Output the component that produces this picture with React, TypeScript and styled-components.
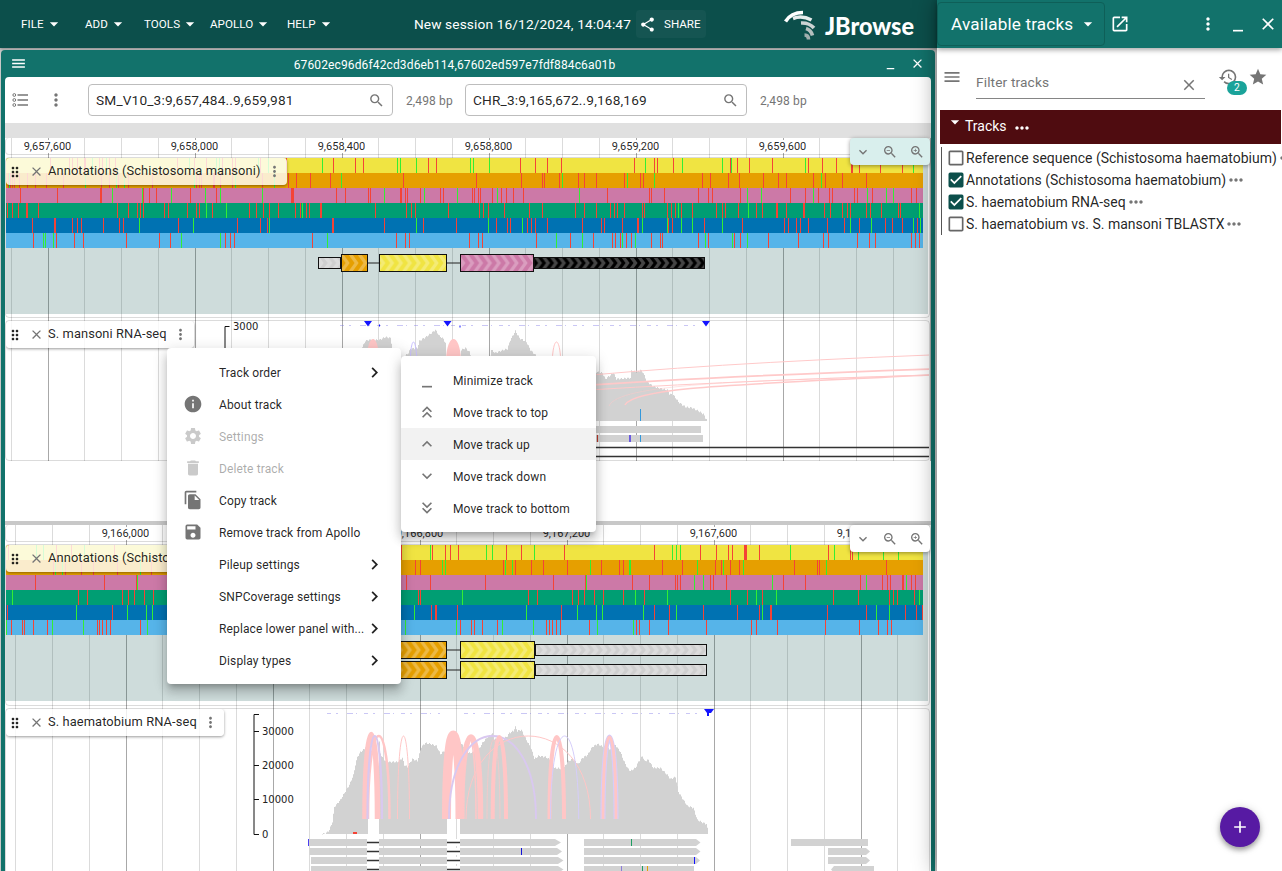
import React from "react";
import styled, { createGlobalStyle, css } from "styled-components";
import {
  MdAdd,
  MdArrowDropDown,
  MdCheckBox,
  MdCheckBoxOutlineBlank,
  MdChevronRight,
  MdClose,
  MdDelete,
  MdDragIndicator,
  MdExpandLess,
  MdExpandMore,
  MdFileCopy,
  MdHistory,
  MdInfo,
  MdKeyboardDoubleArrowDown,
  MdKeyboardDoubleArrowUp,
  MdMenu,
  MdMinimize,
  MdMoreHoriz,
  MdMoreVert,
  MdOpenInNew,
  MdSave,
  MdSearch,
  MdSettings,
  MdShare,
  MdStar,
  MdZoomIn,
  MdZoomOut,
} from "react-icons/md";

const color = {
  primary: "#0c4f4b",
  secondary: "#1aa39a",
  secondaryDark: "#12726b",
  tertiary: "#4f0c10",
  quaternary: "#571aa3",
  text: "rgba(0,0,0,0.87)",
  muted: "#757575",
  border: "rgba(0,0,0,0.14)",
};

const GlobalStyle = createGlobalStyle`
  *, *::before, *::after { box-sizing: border-box; }
  html, body { margin: 0; overflow: hidden; }
  body { font-family: Roboto, "Liberation Sans", sans-serif; font-size: 12px; color: ${color.text}; }
  svg { display: block; flex: none; }
`;

/* ---------- shell ---------- */

const Shell = styled.div`
  display: flex;
  width: 1282px;
  height: 871px;
  overflow: hidden;
  background: #c8c8c8;
`;

const Workspace = styled.div`
  position: relative;
  display: flex;
  flex-direction: column;
  width: 937px;
  flex: none;
`;

const AppBar = styled.header`
  display: flex;
  align-items: center;
  height: 48px;
  flex: none;
  padding: 0 22px 0 15px;
  background: ${color.primary};
  color: #fff;
  box-shadow: 0 1px 3px rgba(0, 0, 0, 0.35);
`;

const MenuButton = styled.button<{ $width: number }>`
  display: flex;
  align-items: center;
  width: ${(p) => p.$width}px;
  padding: 0 0 0 6px;
  border: 0;
  background: none;
  color: inherit;
  font: 400 11.6px Roboto, sans-serif;
  letter-spacing: 0.05px;
  text-transform: uppercase;
  svg { margin-left: 0; }
`;

const SessionName = styled.div`
  margin-left: auto;
  margin-right: 5px;
  padding-bottom: 1px;
  font-size: 13.7px;
  letter-spacing: 0.13px;
`;

const ShareButton = styled.button`
  display: flex;
  align-items: center;
  gap: 8px;
  width: 70px;
  height: 28px;
  padding: 0 0 0 3px;
  border: 0;
  border-radius: 4px;
  background: rgba(255, 255, 255, 0.04);
  color: #fff;
  font: 400 11.6px Roboto, sans-serif;
`;

const Logo = styled.svg`
  margin-left: 78px;
`;

const ViewFrame = styled.section`
  display: flex;
  flex-direction: column;
  flex: 1;
  margin: 2px 2px 0 1px;
  padding: 0 4px;
  border-radius: 4px 4px 0 0;
  background: ${color.secondaryDark};
  overflow: hidden;
`;

const ViewTitleBar = styled.div`
  display: grid;
  grid-template-columns: 60px 1fr 92px;
  align-items: center;
  height: 27px;
  flex: none;
  padding-left: 5px;
  color: #fff;
  font-size: 12px;
  letter-spacing: 0.13px;
  text-align: center;
  span { padding-top: 2px; }
`;

const TitleActions = styled.div`
  display: flex;
  align-items: center;
  justify-content: flex-end;
  gap: 12px;
  padding-right: 6px;
`;

const ViewBody = styled.div`
  display: flex;
  flex-direction: column;
  flex: 1;
  border-radius: 4px 4px 0 0;
  background: #fff;
  overflow: hidden;
`;

const NavBar = styled.div`
  display: flex;
  align-items: center;
  height: 46px;
  flex: none;
  padding-left: 7px;
  color: ${color.muted};
`;

const NavMenu = styled.div`
  margin: 0 22px 0 17px;
`;

const LocationBox = styled.div<{ $width: number }>`
  display: flex;
  align-items: center;
  justify-content: space-between;
  width: ${(p) => p.$width}px;
  height: 32px;
  padding: 0 7px;
  border: 1px solid #bdbdbd;
  border-radius: 4px;
  color: ${color.text};
  font-size: 13.7px;
  letter-spacing: 0.15px;
  svg { color: ${color.muted}; }
`;

const SpanText = styled.span`
  width: 72px;
  padding: 1px 0 0 13px;
  letter-spacing: 0.13px;
`;

const Overview = styled.div`
  height: 15px;
  flex: none;
  background: #e0e0e0;
`;

const EmptySpace = styled.div`
  height: 60px;
  flex: none;
`;

const PanelDivider = styled.div`
  height: 4px;
  flex: none;
  background: #c8c8c8;
`;

/* ---------- linear view ---------- */

const gridLines = css<{ $offset: number }>`
  background-image: linear-gradient(
    90deg,
    rgba(0, 0, 0, 0.34) 0 1px,
    transparent 1px 36px,
    rgba(0, 0, 0, 0.14) 36px 37px,
    transparent 37px 73px,
    rgba(0, 0, 0, 0.14) 73px 74px,
    transparent 74px 110px,
    rgba(0, 0, 0, 0.14) 110px 111px,
    transparent 111px
  );
  background-size: 147px 100%;
  background-position-x: ${(p) => p.$offset}px;
`;

const LinearView = styled.div<{ $offset: number; $height: number }>`
  position: relative;
  display: flex;
  flex-direction: column;
  gap: 2px;
  height: ${(p) => p.$height}px;
  flex: none;
  padding-right: 1px;
  ${gridLines}
`;

const ScaleBar = styled.div<{ $offset: number }>`
  display: flex;
  align-items: center;
  height: 17px;
  flex: none;
  border: 1px solid ${color.border};
  border-top: 0;
  border-radius: 4px;
  overflow: hidden;
  > :first-child { margin-left: ${(p) => p.$offset}px; }
`;

const ScaleLabel = styled.div`
  display: flex;
  justify-content: center;
  width: 147px;
  flex: none;
  font-size: 11px;
  line-height: 13px;
  span { background: #fff; }
`;

const TrackPaper = styled.div<{ $height: number }>`
  position: relative;
  height: ${(p) => p.$height}px;
  flex: none;
  border: 1px solid ${color.border};
  border-radius: 4px;
  overflow: hidden;
`;

const AnnotationArea = styled.div`
  margin-right: 1px;
  background: rgba(12, 79, 75, 0.2);
`;

const TrackLabel = styled.div<{ $width: number }>`
  position: absolute;
  left: 0;
  top: 0;
  display: flex;
  align-items: center;
  width: ${(p) => p.$width}px;
  height: 27px;
  padding-left: 0.5px;
  border-radius: 4px;
  background: rgba(255, 255, 255, 0.8);
  box-shadow: 0 1px 3px rgba(0, 0, 0, 0.4);
  font-size: 12.86px;
  letter-spacing: 0.1px;
  white-space: nowrap;
  span { padding-bottom: 2px; }
  svg:nth-of-type(2) { margin: 0 4.5px 0 6px; color: ${color.muted}; }
  svg:nth-of-type(3) { margin-left: 5px; color: ${color.muted}; }
`;

const ZoomControls = styled.div<{ $tinted: boolean }>`
  position: absolute;
  right: 1px;
  top: 0;
  display: flex;
  align-items: center;
  gap: 11px;
  width: 80px;
  height: 27px;
  padding-left: 5px;
  border-radius: 4px;
  background: ${(p) => (p.$tinted ? "#d9efed" : "#fff")};
  box-shadow: 0 1px 4px rgba(0, 0, 0, 0.4);
  color: ${color.muted};
  z-index: 1;
`;

/* ---------- menus ---------- */

const MenuPanel = styled.div<{ $left: number; $top: number; $width: number }>`
  position: absolute;
  left: ${(p) => p.$left}px;
  top: ${(p) => p.$top}px;
  width: ${(p) => p.$width}px;
  padding: 8px 0;
  border-radius: 4px;
  background: #fff;
  box-shadow: 0 5px 5px -3px rgba(0, 0, 0, 0.2), 0 8px 10px 1px rgba(0, 0, 0, 0.14),
    0 3px 14px 2px rgba(0, 0, 0, 0.12);
  z-index: 2;
`;

const MenuRow = styled.div<{ $disabled?: boolean; $active?: boolean }>`
  display: grid;
  grid-template-columns: 36px 1fr auto;
  align-items: center;
  height: 32px;
  padding: 0 16px;
  background: ${(p) => (p.$active ? "#f2f2f2" : "transparent")};
  opacity: ${(p) => (p.$disabled ? 0.38 : 1)};
  letter-spacing: 0.13px;
  white-space: nowrap;
  > svg:first-child { color: ${color.muted}; }
  span { padding-top: 2px; }
`;

/* ---------- drawer ---------- */

const Drawer = styled.aside`
  position: relative;
  display: flex;
  flex-direction: column;
  width: 345px;
  flex: none;
  background: #fff;
  box-shadow: 0 0 22px rgba(0, 0, 0, 0.42);
`;

const DrawerHeader = styled.div`
  display: flex;
  align-items: center;
  height: 48px;
  flex: none;
  background: ${color.secondaryDark};
  color: #fff;
  box-shadow: 0 2px 5px rgba(0, 0, 0, 0.35);
`;

const WidgetSelect = styled.div`
  display: flex;
  align-items: center;
  width: 168px;
  height: 44px;
  margin-right: 5px;
  padding-left: 13px;
  border: 1px solid #0e5f58;
  border-radius: 4px;
  font-size: 17.1px;
  letter-spacing: 0.16px;
  svg { margin-left: 5px; }
`;

const DrawerActions = styled.div`
  display: flex;
  align-items: center;
  gap: 10px;
  margin-left: auto;
  padding-right: 4px;
`;

const FilterBar = styled.div`
  display: flex;
  align-items: flex-start;
  height: 62px;
  flex: none;
  padding: 19px 0 0 5px;
  color: ${color.muted};
`;

const FilterInput = styled.div`
  display: flex;
  justify-content: space-between;
  width: 229px;
  height: 32px;
  margin: 0 13px 0 14px;
  border-bottom: 1px solid #858585;
  font-size: 13.7px;
  line-height: 31px;
  letter-spacing: 0.13px;
  svg { margin: 9px 7px 0 0; }
`;

const HistoryBadge = styled.div`
  position: relative;
  margin-right: 10px;
  span {
    position: absolute;
    left: 9px;
    top: 14px;
    width: 20px;
    height: 14px;
    border-radius: 7px;
    background: ${color.secondary};
    color: #fff;
    font-size: 10.3px;
    line-height: 14px;
    text-align: center;
  }
`;

const Category = styled.div`
  display: flex;
  align-items: center;
  height: 34px;
  flex: none;
  margin: 0 1px 3px 3px;
  padding-left: 5px;
  background: ${color.tertiary};
  color: #fff;
  font-size: 14px;
  span { padding-bottom: 2px; }
  svg:first-child { margin: -10px 0 0 0; }
  svg:last-child { margin: 2px 0 0 5px; }
`;

const TrackList = styled.div`
  margin-left: 4px;
  padding-left: 4px;
  border-left: 1px solid #555;
`;

const TrackItem = styled.div`
  display: flex;
  align-items: center;
  height: 22px;
  font-size: 14px;
  white-space: nowrap;
  color: ${color.muted};
  span { color: ${color.text}; }
`;

const CheckIcon = styled.div<{ $checked: boolean }>`
  color: ${(p) => (p.$checked ? color.primary : "#666")};
`;

const AddButton = styled.button`
  position: absolute;
  right: 22px;
  bottom: 24px;
  display: flex;
  align-items: center;
  justify-content: center;
  width: 40px;
  height: 40px;
  border: 0;
  border-radius: 50%;
  background: ${color.quaternary};
  color: #fff;
  box-shadow: 0 3px 5px rgba(0, 0, 0, 0.3), 0 1px 10px rgba(0, 0, 0, 0.18);
`;

/* ---------- data ---------- */

// Stop codons are red, start codons ("g" prefix) are green; "*n" widens a mark to n pixels.
const frameColors = ["#f0e442", "#e69f00", "#cc79a7", "#009e73", "#0072b2", "#56b4e9"];

const mansoniFrames = [
  "50 69 72 77 84*2 g92 99 102 g106 109 115 177 g189 194 206 g216 g219 222 232 235 g258 260 g268 286 g322 333 355 363 g397 g400 g416 428 436 g470 g473 g489 520 535 547 561 634 g645 654 657 673 g682 g722 730 g731 737 749 772 g805 808 822 836 851*2 859 880 902 g913",
  "8 g9 10 12 14 19 27 35 46 63 g85 101 109 g116 118 g124 128 152 g194 196 199 201 213*2 220 232 g235 262 g274 288 296 310 330 g341 403 476 521 542 544 559 g562 578 584 596 624 g627 640 643 g654 702 710 728 739 763 778 786 813 g821 825 842 866",
  "20 57 100*2 g112 g142 143 149 156 g171 190 g205 216 g220 g262 291*3 336 345 368 370 g384 400*2 405 407 420 g424 440 443 g457 472 474 478 480 492 g497 501 506 513 523 g579 607 649 651 664 698 708 712 740 g747 g761 790 805 g813 818 829 832 854 857 g867 872 g886 g893 911 916",
  "7 12 18 26*2 38 117 128 137 140 143 164 168 187 196 199 g206 212 g226 249 256 263 269 278 295 300 g302 306 309 320*2 375 406 411 415 448 479 483 488 504 529 542 575 584 596 610 614 617 624 642 644 667 671 675 g678 681 692 716 722 725 738 g748 756 762 776*2 786 803*2 824 830 842 847 850 866 870 881 898 900 g919",
  "32 54*2 72 77 81 103 119 123 g139 178 g193 237 260 267 g269 332*2 384 g416 423 456 g488 496 507 510 g522 527 531 535 547 582 601 604 622 637*2 g642 g667 668 672 g681 g692 704 g722 742 784 788 796 800 808 827 844 g850 859 g871 885 892 902 g913 917 g920",
  "33 g43 g45 g53 56 74 83 126 159 170 g181 g220 225 230 234 312 g327 396 405 409 469 478 482 536 g556 570 g582 593 612 615 620 g622 626 631 g635 651 660 662 698 g705 708 g732 734 740 g747 768 798 823 828 857 869 875 911 915 919",
];

const haematobiumFrames = [
  "8 g36 g43 56 71 g84 114 401 g430 432 445 450 458 g486 g492 506 521 g534 564 654 g672 g676 g680 700 716 728 732 744*3 759 g790 828 g834 850 852 g858 g883 g898",
  "53 g55 g62 65 81 93 117 g140 151 415 420 g442 g445 503 g505 g512 515 531 543 567 g590 601 619 623 g629 g630 662 682 g697 715 721 g723 730 739 g743 794 817 819 g826 886",
  "35 104 136 g137 406 430 485 553 585 g586 632 649 675 677 680 g694 g703 710 713 726 g772 783 805 860 g866 882 887 890 902*2 g906 911 915",
  "g12 78 87 122 128 134 144 153 418 420 g462 528 537 572 578 584 594 603 623 g635 644 g667 730 747 g756 762 g776 833 858 889 893 897 914 g919",
  "7 g76 112 g127 g146 g152 g414 431 435*2 457 g526 561 g577 g596 g602 g643 654 669 g676 703 737 759 g762 770*2 827 866 g876 g889 905 916 922",
  "g6 11 22 24 33 47 g52 g83 97 99 102 106 110 140 g147 g405 g456 460 471 474 482 497 g502 g533 546 549 552 556 560 589 g597 g633 636 639 649 668 706 751 756 777 825 859 878 887 891",
];

type Exon = { x: number; end: number; fill: string; y: number; utr?: boolean };

const mansoniExons: Exon[] = [
  { x: 318, end: 341, fill: "#dcdcdc", y: 263, utr: true },
  { x: 534, end: 705, fill: "#000", y: 263, utr: true },
  { x: 341, end: 368, fill: "#e69f00", y: 263 },
  { x: 379, end: 447, fill: "#f0e442", y: 263 },
  { x: 460, end: 534, fill: "#cc79a7", y: 263 },
];

const haematobiumExons: Exon[] = [650, 670].flatMap((y) => [
  { x: 535, end: 707, fill: "#dcdcdc", y, utr: true },
  { x: 370, end: 447, fill: "#e69f00", y },
  { x: 460, end: 535, fill: "#f0e442", y },
]);

function FrameRow({ marks, fill, y }: { marks: string; fill: string; y: number }) {
  return (
    <g shapeRendering="crispEdges">
      <rect x={6} y={y} width={917} height={15} fill={fill} />
      {marks.split(" ").map((mark, i) => {
        const start = mark.startsWith("g");
        const [x, w] = mark.replace("g", "").split("*").map(Number);
        return <rect key={i} x={x} y={y} width={w || 1} height={15} fill={start ? "#33ee33" : "#f44336"} />;
      })}
    </g>
  );
}

function ExonBox({ exon }: { exon: Exon }) {
  const half = exon.utr ? 6 : 9;
  const pattern = exon.fill === "#000" ? "chevDark" : exon.fill === "#dcdcdc" ? "chevGray" : "chev";
  const box = { x: exon.x + 0.5, y: exon.y - half + 0.5, width: exon.end - exon.x - 1, height: half * 2 - 1 };
  return (
    <g>
      <rect {...box} fill={exon.fill} />
      <rect {...box} fill={`url(#${pattern}${exon.y})`} stroke="#111" strokeWidth={1} />
    </g>
  );
}

function Chevrons({ y }: { y: number }) {
  // Each arrow is deeper than one tile, so the neighbour's tail is drawn as well.
  const pattern = (name: string, fill: string, opacity: number, half: number, depth: number, period: number) => (
    <pattern id={`${name}${y}`} x={1} y={y - 10} width={period} height={20} patternUnits="userSpaceOnUse">
      {[-period, 0].map((x) => (
        <path
          key={x}
          d={`M${x} ${10 - half}h4l${depth} ${half}l-${depth} ${half}h-4l${depth}-${half}z`}
          fill={fill}
          opacity={opacity}
        />
      ))}
    </pattern>
  );
  return (
    <defs>
      {pattern("chev", "#fff", 0.27, 9, 6.5, 8.9)}
      {pattern("chevGray", "#bbb", 0.4, 6, 4.5, 8.6)}
      {pattern("chevDark", "#fff", 0.27, 6, 4.5, 7.95)}
    </defs>
  );
}

function AnnotationCanvas({ top, frames, exons }: { top: number; frames: string[]; exons: Exon[] }) {
  const rows = Array.from(new Set(exons.map((e) => e.y)));
  return (
    <svg width={923} height={156} viewBox={`6 ${top} 923 156`}>
      {frames.map((marks, i) => (
        <FrameRow key={i} marks={marks} fill={frameColors[i]} y={top + i * 15} />
      ))}
      {rows.map((y) => (
        <g key={y}>
          <Chevrons y={y} />
          <rect x={368} y={y - 0.5} width={110} height={1} fill="#222" />
        </g>
      ))}
      {exons.map((exon, i) => (
        <ExonBox key={i} exon={exon} />
      ))}
    </svg>
  );
}

/** Half-loop joining two splice sites; the crest sits at three quarters of the control height. */
function Arc({ from, to, base, crest, width = 1, stroke = "#ffc6c6" }: {
  from: number; to: number; base: number; crest: number; width?: number; stroke?: string;
}) {
  const control = base - (base - crest) / 0.75;
  return (
    <path
      d={`M${from} ${base}C${from} ${control} ${to} ${control} ${to} ${base}`}
      fill="none"
      stroke={stroke}
      strokeWidth={width}
    />
  );
}

// Turns a smooth outline into one-pixel steps like binned coverage.
function steppedPath(points: string, base: number) {
  const pts = points.split(" ").map((p) => p.split(",").map(Number));
  let d = `M${pts[0][0]} ${base}`;
  for (let i = 0; i < pts.length - 1; i++) {
    const [x0, y0] = pts[i];
    const [x1, y1] = pts[i + 1];
    for (let x = x0; x < x1; x++) {
      const y = y0 + ((y1 - y0) * (x - x0)) / (x1 - x0);
      const jitter = Math.sin(x * 1.9) * 0.8;
      d += `L${x} ${(y + jitter).toFixed(1)}H${x + 1}`;
    }
  }
  return `${d}V${base}Z`;
}

const Specks = ({ y, runs }: { y: number; runs: [number, number][] }) => (
  <g>
    {runs.map(([a, b]) => (
      <path key={a} d={`M${a} ${y}H${b}`} stroke="#7d74e8" strokeWidth={1} strokeDasharray="4 5 2 9 6 3 1 7" opacity={0.4} />
    ))}
  </g>
);

const COVERAGE = "#d2d2d2";

function MansoniReads() {
  return (
    <svg width={924} height={138} viewBox="6 321 924 138">
      <path d="M229.500 326.500H225V400" fill="none" stroke="#111" />
      <text x="233" y="330" fontFamily="DejaVu Sans" fontSize="10" fill="#222">3000</text>
      <Specks y={325.5} runs={[[340, 460], [462, 700]]} />
      <path d={steppedPath("362,347 365,341 368,340 379,340 385,337 390,338 392,348", 430)} fill={COVERAGE} />
      <path d={steppedPath("400,360 408,353 410,349 417,348 419,341 427,336 431,333 435,330 439,336 443,339 446,345", 430)} fill={COVERAGE} />
      <path d={steppedPath("461,350 465,348 469,352 472,360 489,360 491,350 495,353 500,351 507,349 510,340 515,331 519,338 526,342 530,350 536,356 560,372 596,372 602,373 605,379 613,373 616,379 630,378 631,371 637,372 640,370 643,373 646,381 652,386 658,388 667,390 669,394 673,395 678,402 685,407 692,408 698,411 703,414 705,418 707,420", 421)} fill={COVERAGE} />
      <path d="M367 360C367 332 379 332 379 360ZM446 360C447 332 460 332 461 360Z" fill="#ffc6c6" />
      <Arc from={410} to={417} base={370} crest={342} stroke="#c9c0ff" />
      <Arc from={552} to={561} base={370} crest={342} />
      <g fill="none" stroke="#ffc9c9">
        <path d="M560 378Q700 364 930 355" />
        <path d="M560 387Q700 377 930 369" strokeWidth="1.700" />
        <path d="M560 392Q700 382 930 375" />
        <path d="M609 406C618 384 740 381 930 375" opacity=".5" />
        <path d="M625 405C634 386 760 384 930 375" strokeWidth="1.500" />
      </g>
      <path d="M364 321h8l-4 5.500zM443.500 321h8l-4 5.500zM702 321h8l-4 5.500z" fill="#1414ff" />
      <path d="M379 325.500h1M459.500 326.500h1" stroke="#1414ff" strokeWidth="2" />
      <g fill={COVERAGE} shapeRendering="crispEdges">
        <rect x="540" y="426" width="161" height="7" />
        <rect x="540" y="435" width="163" height="7" />
      </g>
      <g shapeRendering="crispEdges">
        <rect x="597" y="435" width="1" height="7" fill="#c0392b" />
        <rect x="629" y="435" width="2" height="7" fill="#6a5ae0" />
        <rect x="640" y="435" width="1" height="7" fill="#3498db" />
        <rect x="640" y="409" width="1" height="12" fill="#3498db" />
      </g>
      <path d="M540 447.500H930M540 456.500H930" stroke="#333" strokeWidth="1.700" />
    </svg>
  );
}

const readPath = (x: number, y: number, end: number, tip: number) =>
  `M${x} ${y}H${end}L${end + tip} ${y + 3.5}L${end} ${y + 7}H${x}Z`;

function HaematobiumReads() {
  const base = 819;
  const lilac = "#d9c8f0";
  return (
    <svg width={924} height={162} viewBox="6 709 924 162">
      <g fill="none" stroke="#111">
        <path d="M259 714.500H254V834.500H259M254 731.500H259M254 765.500H259M254 799.500H259" />
      </g>
      <g fontFamily="DejaVu Sans" fontSize="10" fill="#222">
        <text x="262" y="735">30000</text>
        <text x="262" y="769">20000</text>
        <text x="262" y="803">10000</text>
        <text x="262" y="838">0</text>
      </g>
      <Specks y={713.5} runs={[[327, 440], [464, 698]]} />
      <path d={steppedPath("322,834 326,833 329,830 332,822 334,807 340,800 347,788 349,785 353,775 355,765 357,757 360,752 364,749 367,743 368,740", 834)} fill={COVERAGE} />
      <path d={steppedPath("379,742 380,754 384,760 389,762 397,762 402,758 404,765 407,767 412,759 417,761 421,747 425,743 430,744 436,746 440,754 444,751 447,748", 834)} fill={COVERAGE} />
      <path d={steppedPath("460,742 463,747 468,753 477,752 482,743 488,736 492,734 494,739 502,740 507,736 509,733 513,731 515,727 517,731 521,730 524,736 527,742 530,747 533,755 534,759 538,756 545,757 550,760 554,768 563,769 567,762 572,759 578,764 582,758 587,755 592,747 597,744 603,747 610,749 615,745 620,752 623,760 627,768 630,771 635,768 638,762 642,756 644,761 648,760 653,768 660,768 667,775 670,779 675,777 678,792 683,800 687,806 693,808 697,820 703,823 706,824 708,833", 834)} fill={COVERAGE} />
      <Arc from={446.5} to={460} base={base} crest={735} width={9} />
      <Arc from={461.5} to={480.5} base={base} crest={737} width={5.5} />
      <Arc from={463} to={476} base={base} crest={739} width={1.5} />
      <Arc from={365} to={377.500} base={base} crest={734.500} width={5.500} />
      <Arc from={368} to={389.500} base={base} crest={736} width={2.500} />
      <Arc from={367.500} to={382} base={base} crest={736} width={2.200} stroke={lilac} />
      <Arc from={397.500} to={409.500} base={base} crest={736} />
      <Arc from={449} to={536} base={base} crest={736} width={1.900} stroke={lilac} />
      <Arc from={466} to={590.500} base={base} crest={736} />
      <Arc from={487} to={500} base={base} crest={740} width={0.700} />
      <Arc from={492.700} to={506} base={base} crest={737} width={4} />
      <Arc from={549.500} to={564} base={base} crest={737} width={4} />
      <Arc from={550.500} to={578.700} base={base} crest={736} stroke="#d5cdfa" />
      <Arc from={603} to={616} base={base} crest={737} width={5} stroke="#d5cdfa" />
      <Arc from={603} to={616} base={base} crest={737} width={2.800} />
      <path d="M353 833H357" stroke="#f44336" strokeWidth="2" />
      <path d="M704 709h10l-3 4h-2v3h-2v-3z" fill="#1414ff" />
      <g fill={COVERAGE}>
        {[[309, 839, 555, 6], [309.5, 848, 557, 5], [311, 857, 558, 5.500], [311, 866, 558, 5.500],
          [584, 839, 696, 4.500], [584, 848, 696, 4.500], [584, 857, 696, 4], [584, 866, 694, 0],
          [791, 839, 868, 0], [828, 848, 866, 4], [828, 857, 866, 4], [834, 866, 874, 0]].map(([x, y, end, tip], i) => (
          <path key={i} d={readPath(x, y, end, tip)} />
        ))}
        <path d="M834 866v7l-3-3.500z" />
      </g>
      {[839, 848, 857, 866].map((y) => (
        <g key={y}>
          <path d={`M367 ${y}h12v7h-12zM447 ${y}h13v7h-13z`} fill="#fff" />
          <path d={`M367 ${y + 3.5}h12M447 ${y + 3.5}h13`} stroke="#333" strokeWidth="1.500" />
        </g>
      ))}
      <g shapeRendering="crispEdges">
        <rect x="308" y="839" width="1" height="7" fill="#4a3ff0" />
        <rect x="521" y="848" width="1" height="7" fill="#1414d8" />
        <rect x="631" y="839" width="1" height="7" fill="#1e9e62" />
        <rect x="694" y="857" width="1" height="7" fill="#1414ff" />
        <rect x="621" y="866" width="1" height="5" fill="#8d7bd8" />
        <rect x="642" y="866" width="1" height="5" fill="#1e9e62" />
        <rect x="647" y="866" width="1" height="5" fill="#e69f00" />
      </g>
    </svg>
  );
}

/* ---------- parts ---------- */

function TrackSelectorIcon() {
  return (
    <svg width="17" height="16" viewBox="0 0 17 16" fill="none" stroke={color.muted}>
      <circle cx="2.300" cy="3" r="1.400" />
      <circle cx="2.300" cy="8" r="1.400" />
      <circle cx="2.300" cy="13" r="1.400" />
      <path d="M5.500 3H16M5.500 8H16M5.500 13H16" strokeWidth="1.500" />
    </svg>
  );
}

function JBrowseLogo() {
  return (
    <Logo width="131" height="34" viewBox="784 7 131 34">
      <g fill="none">
        <path d="M785.500 21.500Q791 12.500 803 12.500" stroke="#fff" strokeWidth="3.600" />
        <path d="M793 18.500Q802 15 811.500 20" stroke="#e6ecec" strokeWidth="3.600" />
        <path d="M801 23Q809 22.500 814 28" stroke="#cbd3d3" strokeWidth="3.600" />
        <path d="M806 28.500Q811 30 812.500 35.500" stroke="#b4bfbe" strokeWidth="3.600" />
        <path d="M804.500 35Q808.500 35 808.500 39.500" stroke="#a0aead" strokeWidth="3.600" />
      </g>
      <text x="825" y="35" fill="#fff" fontFamily="Lato" fontWeight="900" fontSize="24" textLength="89" lengthAdjust="spacingAndGlyphs">
        JBrowse
      </text>
    </Logo>
  );
}

const Label = ({ name, width }: { name: string; width: number }) => (
  <TrackLabel $width={width}>
    <MdDragIndicator size={16} />
    <MdClose size={15} />
    <span>{name}</span>
    <MdMoreVert size={17} />
  </TrackLabel>
);

const Controls = ({ tinted }: { tinted: boolean }) => (
  <ZoomControls $tinted={tinted}>
    <MdExpandMore size={16} />
    <MdZoomOut size={16} />
    <MdZoomIn size={16} />
  </ZoomControls>
);

const Scale = ({ labels, offset }: { labels: string[]; offset: number }) => (
  <ScaleBar $offset={offset}>
    {labels.map((label) => (
      <ScaleLabel key={label}>
        <span>{label}</span>
      </ScaleLabel>
    ))}
  </ScaleBar>
);

type Item = { text: string; icon?: React.ReactNode; disabled?: boolean; sub?: boolean; active?: boolean };

const trackMenu: Item[] = [
  { text: "Track order", sub: true },
  { text: "About track", icon: <MdInfo size={20} /> },
  { text: "Settings", icon: <MdSettings size={20} />, disabled: true },
  { text: "Delete track", icon: <MdDelete size={20} />, disabled: true },
  { text: "Copy track", icon: <MdFileCopy size={20} /> },
  { text: "Remove track from Apollo", icon: <MdSave size={20} /> },
  { text: "Pileup settings", sub: true },
  { text: "SNPCoverage settings", sub: true },
  { text: "Replace lower panel with...", sub: true },
  { text: "Display types", sub: true },
];

const orderMenu: Item[] = [
  { text: "Minimize track", icon: <MdMinimize size={20} /> },
  { text: "Move track to top", icon: <MdKeyboardDoubleArrowUp size={20} /> },
  { text: "Move track up", icon: <MdExpandLess size={20} />, active: true },
  { text: "Move track down", icon: <MdExpandMore size={20} /> },
  { text: "Move track to bottom", icon: <MdKeyboardDoubleArrowDown size={20} /> },
];

const Menu = ({ items, left, top, width }: { items: Item[]; left: number; top: number; width: number }) => (
  <MenuPanel $left={left} $top={top} $width={width}>
    {items.map((item) => (
      <MenuRow key={item.text} $disabled={item.disabled} $active={item.active}>
        {item.icon ?? <i />}
        <span>{item.text}</span>
        {item.sub && <MdChevronRight size={21} />}
      </MenuRow>
    ))}
  </MenuPanel>
);

const tracks = [
  { name: "Reference sequence (Schistosoma haematobium)", checked: false },
  { name: "Annotations (Schistosoma haematobium)", checked: true },
  { name: "S. haematobium RNA-seq", checked: true },
  { name: "S. haematobium vs. S. mansoni TBLASTX", checked: false },
];

const appMenus: [string, number][] = [["File", 64], ["Add", 59], ["Tools", 66], ["Apollo", 77], ["Help", 60]];

export default function App() {
  return (
    <>
      <GlobalStyle />
      <Shell>
        <Workspace>
          <AppBar>
            {appMenus.map(([name, width]) => (
              <MenuButton key={name} $width={width}>
                {name}
                <MdArrowDropDown size={20} />
              </MenuButton>
            ))}
            <SessionName>New session 16/12/2024, 14:04:47</SessionName>
            <ShareButton>
              <MdShare size={17} />
              SHARE
            </ShareButton>
            <JBrowseLogo />
          </AppBar>
          <ViewFrame>
            <ViewTitleBar>
              <MdMenu size={17} />
              <span>67602ec96d6f42cd3d6eb114,67602ed597e7fdf884c6a01b</span>
              <TitleActions>
                <MdMinimize size={15} />
                <MdClose size={15} />
              </TitleActions>
            </ViewTitleBar>
            <ViewBody>
              <NavBar>
                <TrackSelectorIcon />
                <NavMenu>
                  <MdMoreVert size={20} />
                </NavMenu>
                <LocationBox $width={305}>
                  SM_V10_3:9,657,484..9,659,981
                  <MdSearch size={17} />
                </LocationBox>
                <SpanText>2,498 bp</SpanText>
                <LocationBox $width={282}>
                  CHR_3:9,165,672..9,168,169
                  <MdSearch size={17} />
                </LocationBox>
                <SpanText>2,498 bp</SpanText>
              </NavBar>
              <Overview />
              <LinearView $offset={43} $height={323}>
                <Scale
                  offset={-32}
                  labels={["9,657,600", "9,658,000", "9,658,400", "9,658,800", "9,659,200", "9,659,600"]}
                />
                <TrackPaper $height={161}>
                  <AnnotationArea>
                    <AnnotationCanvas top={158} frames={mansoniFrames} exons={mansoniExons} />
                  </AnnotationArea>
                  <Label name="Annotations (Schistosoma mansoni)" width={281} />
                </TrackPaper>
                <TrackPaper $height={141}>
                  <MansoniReads />
                  <Label name="S. mansoni RNA-seq" width={188} />
                </TrackPaper>
                <Controls tinted />
              </LinearView>
              <EmptySpace />
              <PanelDivider />
              <LinearView $offset={121} $height={360}>
                <Scale
                  offset={46}
                  labels={["9,166,000", "9,166,400", "9,166,800", "9,167,200", "9,167,600", "9,168,000"]}
                />
                <TrackPaper $height={162}>
                  <AnnotationArea>
                    <AnnotationCanvas top={545} frames={haematobiumFrames} exons={haematobiumExons} />
                  </AnnotationArea>
                  <Label name="Annotations (Schistosoma haematobium)" width={320} />
                </TrackPaper>
                <TrackPaper $height={190}>
                  <HaematobiumReads />
                  <Label name="S. haematobium RNA-seq" width={218} />
                </TrackPaper>
                <Controls tinted={false} />
              </LinearView>
            </ViewBody>
          </ViewFrame>
        </Workspace>
        <Drawer>
          <DrawerHeader>
            <WidgetSelect>
              Available tracks
              <MdArrowDropDown size={20} />
            </WidgetSelect>
            <MdOpenInNew size={20} />
            <DrawerActions>
              <MdMoreVert size={20} />
              <MdMinimize size={20} />
              <MdClose size={20} />
            </DrawerActions>
          </DrawerHeader>
          <FilterBar>
            <MdMenu size={20} />
            <FilterInput>
              Filter tracks
              <MdClose size={18} />
            </FilterInput>
            <HistoryBadge>
              <MdHistory size={20} />
              <span>2</span>
            </HistoryBadge>
            <MdStar size={20} />
          </FilterBar>
          <Category>
            <MdArrowDropDown size={20} />
            <span>Tracks</span>
            <MdMoreHoriz size={20} />
          </Category>
          <TrackList>
            {tracks.map((track) => (
              <TrackItem key={track.name}>
                <CheckIcon $checked={track.checked}>
                  {track.checked ? <MdCheckBox size={20} /> : <MdCheckBoxOutlineBlank size={20} />}
                </CheckIcon>
                <span>{track.name}</span>
                <MdMoreHoriz size={20} />
              </TrackItem>
            ))}
          </TrackList>
          <AddButton>
            <MdAdd size={20} />
          </AddButton>
        </Drawer>
        <Menu items={trackMenu} left={167} top={348} width={234} />
        <Menu items={orderMenu} left={401} top={356} width={195} />
      </Shell>
    </>
  );
}
